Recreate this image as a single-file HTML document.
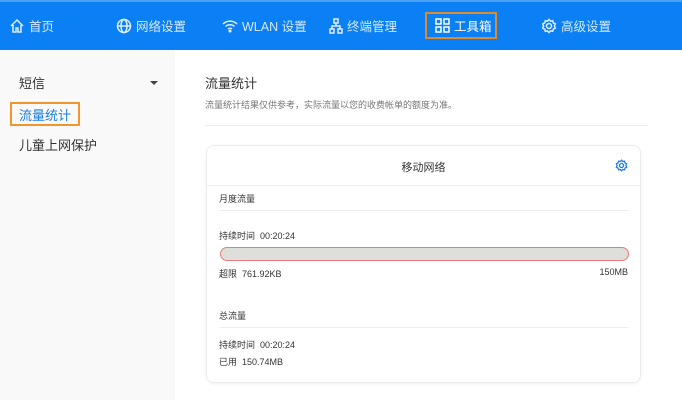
<!DOCTYPE html>
<html><head><meta charset="utf-8"><style>
*{margin:0;padding:0;box-sizing:border-box}
body{width:682px;height:400px;overflow:hidden;background:#fff;font-family:"Liberation Sans","Noto Sans CJK SC",sans-serif;position:relative;color:#333}
.nav{position:absolute;left:0;top:0;width:682px;height:50px;background:#0b80f5;border-top:2px solid #4aa0f5}
.ni{position:absolute;top:14px;color:#d6e8ff;font-size:12.5px;display:flex;align-items:center;gap:4px;white-space:nowrap}
.ni svg{stroke:#e0eeff;fill:none;stroke-width:1.5}
.act{position:absolute;left:425px;top:12px;width:72px;height:27px;border:2px solid #e08a2c;}
.side{position:absolute;left:0;top:50px;width:175px;height:350px;background:#f9f9f9}
.abs{position:absolute;white-space:nowrap}
.card{position:absolute;left:206px;top:145px;width:435px;height:238px;border:1px solid #ececec;border-radius:8px;background:#fff;box-shadow:0 1px 3px rgba(0,0,0,.06)}
.hr{position:absolute;height:1px;background:#eee}
.s{font-size:9px;color:#333}
</style></head><body>
<div class="nav">
 <div class="ni" style="left:9px"><svg width="16" height="16" viewBox="0 0 16 16"><path d="M2 8L8 2l6 6M4 7v7h3v-4h2v4h3V7"/></svg>首页</div>
 <div class="ni" style="left:116px"><svg width="16" height="16" viewBox="0 0 16 16"><circle cx="8" cy="8" r="6.5"/><ellipse cx="8" cy="8" rx="3" ry="6.5"/><path d="M1.5 8h13"/></svg>网络设置</div>
 <div class="ni" style="left:222px"><svg width="16" height="14" viewBox="0 0 16 14"><path d="M1 5a10 10 0 0 1 14 0M3.5 7.5a6.5 6.5 0 0 1 9 0M6 10a3 3 0 0 1 4 0"/><circle cx="8" cy="12" r=".8" fill="#e0eeff"/></svg>WLAN 设置</div>
 <div class="ni" style="left:329px"><svg width="14" height="16" viewBox="0 0 14 16"><rect x="5" y="1" width="4" height="4"/><rect x="1" y="11" width="4" height="4"/><rect x="9" y="11" width="4" height="4"/><path d="M7 5v3M3 11V8h8v3"/></svg>终端管理</div>
 <div class="ni" style="left:435px;color:#fff"><svg width="15" height="15" viewBox="0 0 15 15" style="stroke:#fff"><rect x="1" y="1" width="5" height="5"/><rect x="9" y="1" width="5" height="5"/><rect x="1" y="9" width="5" height="5"/><rect x="9" y="9" width="5" height="5"/></svg>工具箱</div>
 <div class="ni" style="left:541px"><svg width="16" height="16" viewBox="0 0 16 16"><circle cx="8" cy="8" r="2.5"/><path d="M8 1.5l1.5 1.6 2.2-.4.6 2.1 2 1-.9 2.2.9 2.2-2 1-.6 2.1-2.2-.4L8 14.5l-1.5-1.6-2.2.4-.6-2.1-2-1 .9-2.2-.9-2.2 2-1 .6-2.1 2.2.4z"/></svg>高级设置</div>
</div>
<div class="act"></div>
<div class="side"></div>
<div class="abs" style="left:19px;top:73px;font-size:13px">短信</div>
<div class="abs" style="left:150px;top:81px;width:0;height:0;border-left:4px solid transparent;border-right:4px solid transparent;border-top:4px solid #444"></div>
<div class="abs" style="left:10px;top:102px;width:70px;height:24px;border:2px solid #f0962c"></div>
<div class="abs" style="left:19px;top:105px;font-size:13px;color:#1a7ee8">流量统计</div>
<div class="abs" style="left:19px;top:135px;font-size:13px">儿童上网保护</div>
<div class="abs" style="left:205px;top:73px;font-size:13px">流量统计</div>
<div class="abs" style="left:205px;top:98px;font-size:9px;color:#777">流量统计结果仅供参考，实际流量以您的收费帐单的额度为准。</div>
<div class="hr" style="left:205px;top:125px;width:443px"></div>
<div class="card">
 <div class="abs" style="left:0;width:433px;text-align:center;top:13px;font-size:11px">移动网络</div>
 <svg class="abs" style="left:408px;top:13px" width="13" height="13" viewBox="0 0 16 16" fill="none" stroke="#1a7ee8" stroke-width="1.6"><circle cx="8" cy="8" r="2.5"/><path d="M8 1.5l1.5 1.6 2.2-.4.6 2.1 2 1-.9 2.2.9 2.2-2 1-.6 2.1-2.2-.4L8 14.5l-1.5-1.6-2.2.4-.6-2.1-2-1 .9-2.2-.9-2.2 2-1 .6-2.1 2.2.4z"/></svg>
 <div class="hr" style="left:0;top:39px;width:433px;background:#f0f0f0"></div>
 <div class="abs s" style="left:12px;top:46px">月度流量</div>
 <div class="hr" style="left:12px;top:64px;width:410px"></div>
 <div class="abs s" style="left:12px;top:83px">持续时间&nbsp; 00:20:24</div>
 <div class="abs" style="left:13px;top:101px;width:409px;height:14px;border:1px solid #e57b7b;border-radius:7px;background:#dededa"></div>
 <div class="abs s" style="left:12px;top:121px">超限&nbsp; 761.92KB</div>
 <div class="abs s" style="right:12px;top:121px">150MB</div>
 <div class="abs s" style="left:12px;top:163px">总流量</div>
 <div class="hr" style="left:12px;top:181px;width:410px"></div>
 <div class="abs s" style="left:12px;top:192px">持续时间&nbsp; 00:20:24</div>
 <div class="abs s" style="left:12px;top:209px">已用&nbsp; 150.74MB</div>
</div>
</body></html>
